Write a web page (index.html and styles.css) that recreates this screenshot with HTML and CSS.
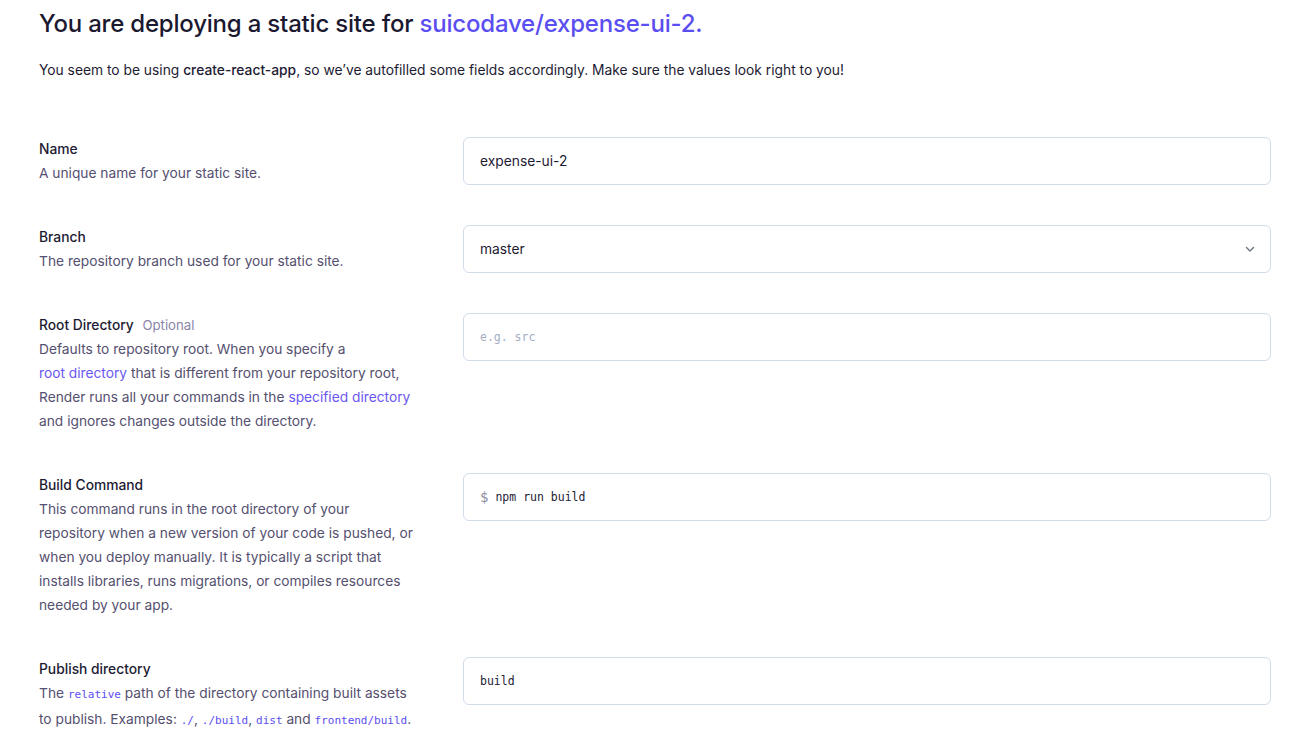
FILE: index.html
```html
<!DOCTYPE html>
<html>
<head>
<meta charset="utf-8">
<link rel="stylesheet" href="styles.css">
</head>
<body>
<main class="page">
  <h1 class="title">You are deploying a static site for <a class="repo">suicodave/expense-ui-2.</a></h1>
  <p class="intro">You seem to be using <strong>create-react-app</strong>, so we’ve autofilled some fields accordingly. Make sure the values look right to you!</p>

  <div class="rows">
    <div class="row">
      <div class="info">
        <div class="label">Name</div>
        <div class="desc">A unique name for your static site.</div>
      </div>
      <div class="field"><div class="input">expense-ui-2</div></div>
    </div>

    <div class="row">
      <div class="info">
        <div class="label">Branch</div>
        <div class="desc">The repository branch used for your static site.</div>
      </div>
      <div class="field">
        <div class="input select">
          <span>master</span>
          <svg class="chev" width="12" height="12" viewBox="0 0 12 12"><path d="M2.5 4.5 L6 8 L9.5 4.5" fill="none" stroke="#6b7280" stroke-width="1.4" stroke-linecap="round" stroke-linejoin="round"/></svg>
        </div>
      </div>
    </div>

    <div class="row">
      <div class="info">
        <div class="label">Root Directory <span class="opt">Optional</span></div>
        <div class="desc">Defaults to repository root. When you specify a<br><a class="link">root directory</a> that is different from your repository root,<br>Render runs all your commands in the <a class="link">specified directory</a><br>and ignores changes outside the directory.</div>
      </div>
      <div class="field"><div class="input mono placeholder">e.g. src</div></div>
    </div>

    <div class="row">
      <div class="info">
        <div class="label">Build Command</div>
        <div class="desc">This command runs in the root directory of your<br>repository when a new version of your code is pushed, or<br>when you deploy manually. It is typically a script that<br>installs libraries, runs migrations, or compiles resources<br>needed by your app.</div>
      </div>
      <div class="field"><div class="input mono"><span class="dollar">$</span>npm run build</div></div>
    </div>

    <div class="row">
      <div class="info">
        <div class="label">Publish directory</div>
        <div class="desc">The <code>relative</code> path of the directory containing built assets<br>to publish. Examples: <code>./</code>, <code>./build</code>, <code>dist</code> and <code>frontend/build</code>.</div>
      </div>
      <div class="field"><div class="input mono">build</div></div>
    </div>
  </div>
</main>
</body>
</html>
```

FILE: styles.css
```css
* { box-sizing: border-box; }
html, body { margin: 0; padding: 0; background: #ffffff; }
body {
  font-family: Inter, "Noto Sans", "Liberation Sans", sans-serif;
  color: #1d1b33;
}
.page {
  padding: 8px 45px 0 39px;
}
.title {
  margin: 0;
  font-size: 24px;
  line-height: 32px;
  font-weight: 500;
  letter-spacing: -0.2px;
  color: #1b1930;
}
.repo { color: #5b4ef0; text-decoration: none; }
.intro {
  margin: 20px 0 0 0;
  font-size: 13.8px;
  line-height: 20px;
  color: #1d1b33;
}
.intro strong { font-weight: 500; }
.rows {
  margin-top: 57px;
  display: flex;
  flex-direction: column;
  gap: 40px;
}
.row {
  display: grid;
  grid-template-columns: 384px 1fr;
  column-gap: 40px;
  align-items: start;
}
.label {
  font-size: 13.8px;
  line-height: 24px;
  font-weight: 500;
  color: #1d1b33;
}
.opt {
  margin-left: 5px;
  font-weight: 400;
  color: #8a86a8;
  font-size: 13.2px;
}
.desc {
  font-size: 13.75px;
  line-height: 24px;
  color: #55506f;
}
.link { color: #6a57f0; text-decoration: none; }
code {
  font-family: "DejaVu Sans Mono", "Liberation Mono", monospace;
  font-size: 11px;
  color: #5b4ef0;
}
.input {
  height: 48px;
  border: 1px solid #d2dbea;
  border-radius: 6px;
  padding: 0 16px;
  display: flex;
  align-items: center;
  font-size: 13.8px;
  color: #1d1b33;
}
.select { justify-content: space-between; padding-right: 14px; }
.chev { display: block; }
.mono {
  font-family: "DejaVu Sans Mono", "Liberation Mono", monospace;
  font-size: 11.5px;
  color: #1d1b33;
}
.placeholder { color: #a3aec4; }
.dollar {
  color: #8b8fa0;
  font-size: 14px;
  margin-right: 7px;
}
```
